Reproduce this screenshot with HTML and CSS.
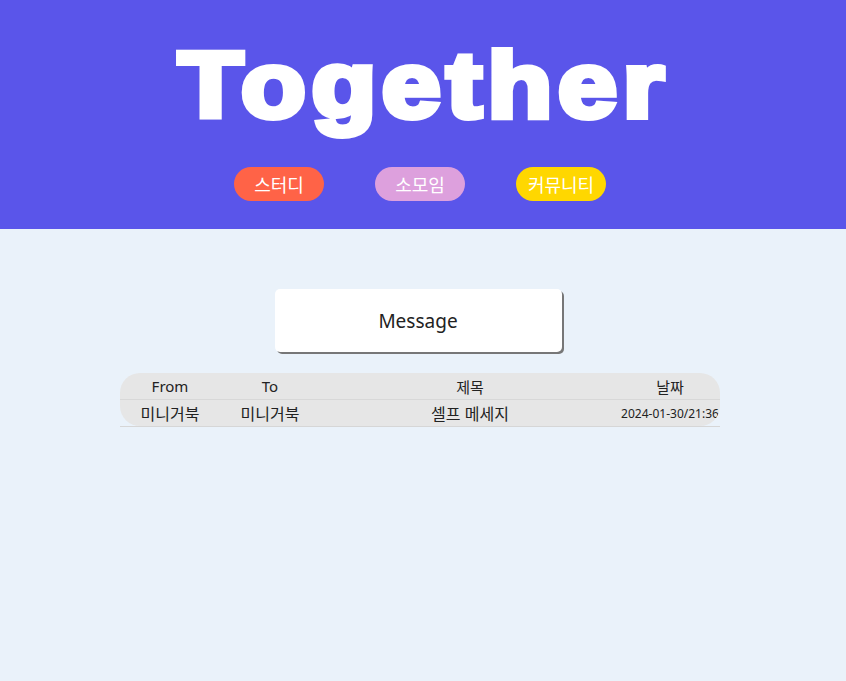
FILE: index.html
```html
<!DOCTYPE html>
<html lang="ko">
<head>
<meta charset="utf-8">
<title>Together</title>
<link rel="stylesheet" href="styles.css">
</head>
<body>
<header class="hero">
  <h1 class="title">Together</h1>
  <nav class="tabs">
    <a class="pill pill-study" href="#">스터디</a>
    <a class="pill pill-group" href="#">소모임</a>
    <a class="pill pill-community" href="#">커뮤니티</a>
  </nav>
</header>
<main class="content">
  <button class="msg-btn" type="button">Message</button>
  <div class="board-wrap">
    <div class="board">
      <div class="row head">
        <div class="cell">From</div>
        <div class="cell">To</div>
        <div class="cell">제목</div>
        <div class="cell">날짜</div>
      </div>
      <div class="row body-row">
        <div class="cell">미니거북</div>
        <div class="cell">미니거북</div>
        <div class="cell">셀프 메세지</div>
        <div class="cell date">2024-01-30/21:36</div>
      </div>
    </div>
  </div>
</main>
</body>
</html>
```
FILE: styles.css
```css
* { box-sizing: border-box; }
html, body { margin: 0; padding: 0; }
body {
  background: #eaf2fa;
  font-family: "Noto Sans", "Noto Sans CJK KR", sans-serif;
  color: #222;
  min-height: 681px;
}
.hero {
  background: #5a55ea;
  height: 229px;
  display: flex;
  flex-direction: column;
  align-items: center;
  padding-right: 6px;
}
.title {
  margin: 0;
  padding-top: 32px;
  padding-left: 7px;
  font-family: "Liberation Sans", Arial, sans-serif;
  font-weight: 700;
  font-size: 93px;
  line-height: 107px;
  color: #fff;
  letter-spacing: 5px;
  -webkit-text-stroke: 6px #fff;
  transform: scaleX(1.14);
}
.tabs {
  display: flex;
  gap: 51px;
  margin-top: 28px;
}
.pill {
  width: 90px;
  height: 34px;
  border-radius: 17px;
  display: flex;
  align-items: center;
  justify-content: center;
  color: #fff;
  text-decoration: none;
  font-family: "Noto Sans CJK KR", sans-serif;
  font-size: 18px;
}
.pill-study { background: #ff6347; }
.pill-group { background: #dda0dd; }
.pill-community { background: #ffd700; }
.content {
  padding: 60px 126px 0 120px;
  display: flex;
  flex-direction: column;
  align-items: center;
}
.msg-btn {
  width: 287px;
  height: 63px;
  background: #fff;
  border: none;
  border-radius: 5px;
  box-shadow: 2px 2px 0 #777;
  font-family: "Noto Sans", sans-serif;
  font-size: 19px;
  color: #222;
  padding: 0;
  margin-left: -4px;
}
.board-wrap {
  margin-top: 21px;
  width: 600px;
  border-bottom: 1px solid #d6d6d6;
}
.board {
  background: #e6e6e6;
  border-radius: 20px;
  overflow: hidden;
}
.row {
  display: grid;
  grid-template-columns: 100px 100px 1fr 100px;
  height: 26px;
  align-items: center;
  font-size: 15px;
}
.row.head { border-bottom: 1px solid #d8d8d8; height: 27px; }
.row.body-row { font-size: 16px; }
.cell {
  text-align: center;
  white-space: nowrap;
  font-family: "Noto Sans", "Noto Sans CJK KR", sans-serif;
}
.date { font-size: 12px; }
```
